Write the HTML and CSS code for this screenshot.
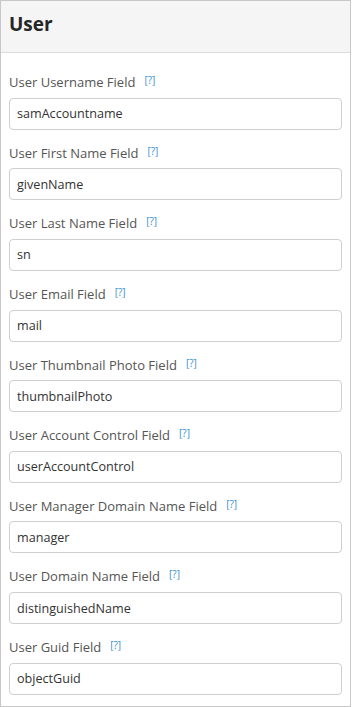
FILE: index.html
```html
<!DOCTYPE html>
<html>
<head>
<meta charset="utf-8">
<link rel="stylesheet" href="styles.css">
</head>
<body>
<div class="panel">
  <div class="panel-head"><h2 class="title">User</h2></div>
  <div class="panel-body">
    <div class="field">
      <label class="label">User Username Field<span class="help">[?]</span></label>
      <input class="input" type="text" value="samAccountname">
    </div>
    <div class="field">
      <label class="label">User First Name Field<span class="help">[?]</span></label>
      <input class="input" type="text" value="givenName">
    </div>
    <div class="field">
      <label class="label">User Last Name Field<span class="help">[?]</span></label>
      <input class="input" type="text" value="sn">
    </div>
    <div class="field">
      <label class="label">User Email Field<span class="help">[?]</span></label>
      <input class="input" type="text" value="mail">
    </div>
    <div class="field">
      <label class="label">User Thumbnail Photo Field<span class="help">[?]</span></label>
      <input class="input" type="text" value="thumbnailPhoto">
    </div>
    <div class="field">
      <label class="label">User Account Control Field<span class="help">[?]</span></label>
      <input class="input" type="text" value="userAccountControl">
    </div>
    <div class="field">
      <label class="label">User Manager Domain Name Field<span class="help">[?]</span></label>
      <input class="input" type="text" value="manager">
    </div>
    <div class="field">
      <label class="label">User Domain Name Field<span class="help">[?]</span></label>
      <input class="input" type="text" value="distinguishedName">
    </div>
    <div class="field">
      <label class="label">User Guid Field<span class="help">[?]</span></label>
      <input class="input" type="text" value="objectGuid">
    </div>
  </div>
</div>
</body>
</html>
```
FILE: styles.css
```css
* { box-sizing: border-box; }
html, body { margin: 0; padding: 0; background: #fff; }
body { font-family: "Open Sans", "Noto Sans", sans-serif; }
.panel {
  width: 351px;
  height: 707px;
  border: 1px solid #c8c8c8;
  background: #fff;
}
.panel-head {
  height: 52px;
  background: #f5f5f5;
  border-bottom: 1px solid #dcdcdc;
  display: flex;
  align-items: center;
  padding: 0 8px;
}
.title {
  margin: 0;
  font-size: 19px;
  font-weight: 700;
  color: #262626;
  line-height: 1;
  margin-top: -4px;
}
.panel-body {
  padding: 20px 8px 0 8px;
  display: flex;
  flex-direction: column;
  gap: 14px;
}
.field { display: flex; flex-direction: column; gap: 6px; }
.label {
  font-size: 13px;
  line-height: 18.625px;
  height: 18.625px;
  color: #555;
  display: flex;
  align-items: center;
}
.help {
  font-size: 10px;
  color: #3a8fd0;
  margin-left: 9px;
  margin-top: -4px;
}
.input {
  width: 333px;
  height: 32px;
  border: 1px solid #cfcfcf;
  border-radius: 4px;
  padding: 0 7px;
  font-family: "Open Sans", "Noto Sans", sans-serif;
  font-size: 12.6px;
  color: #333;
  background: #fff;
  outline: none;
}
```
